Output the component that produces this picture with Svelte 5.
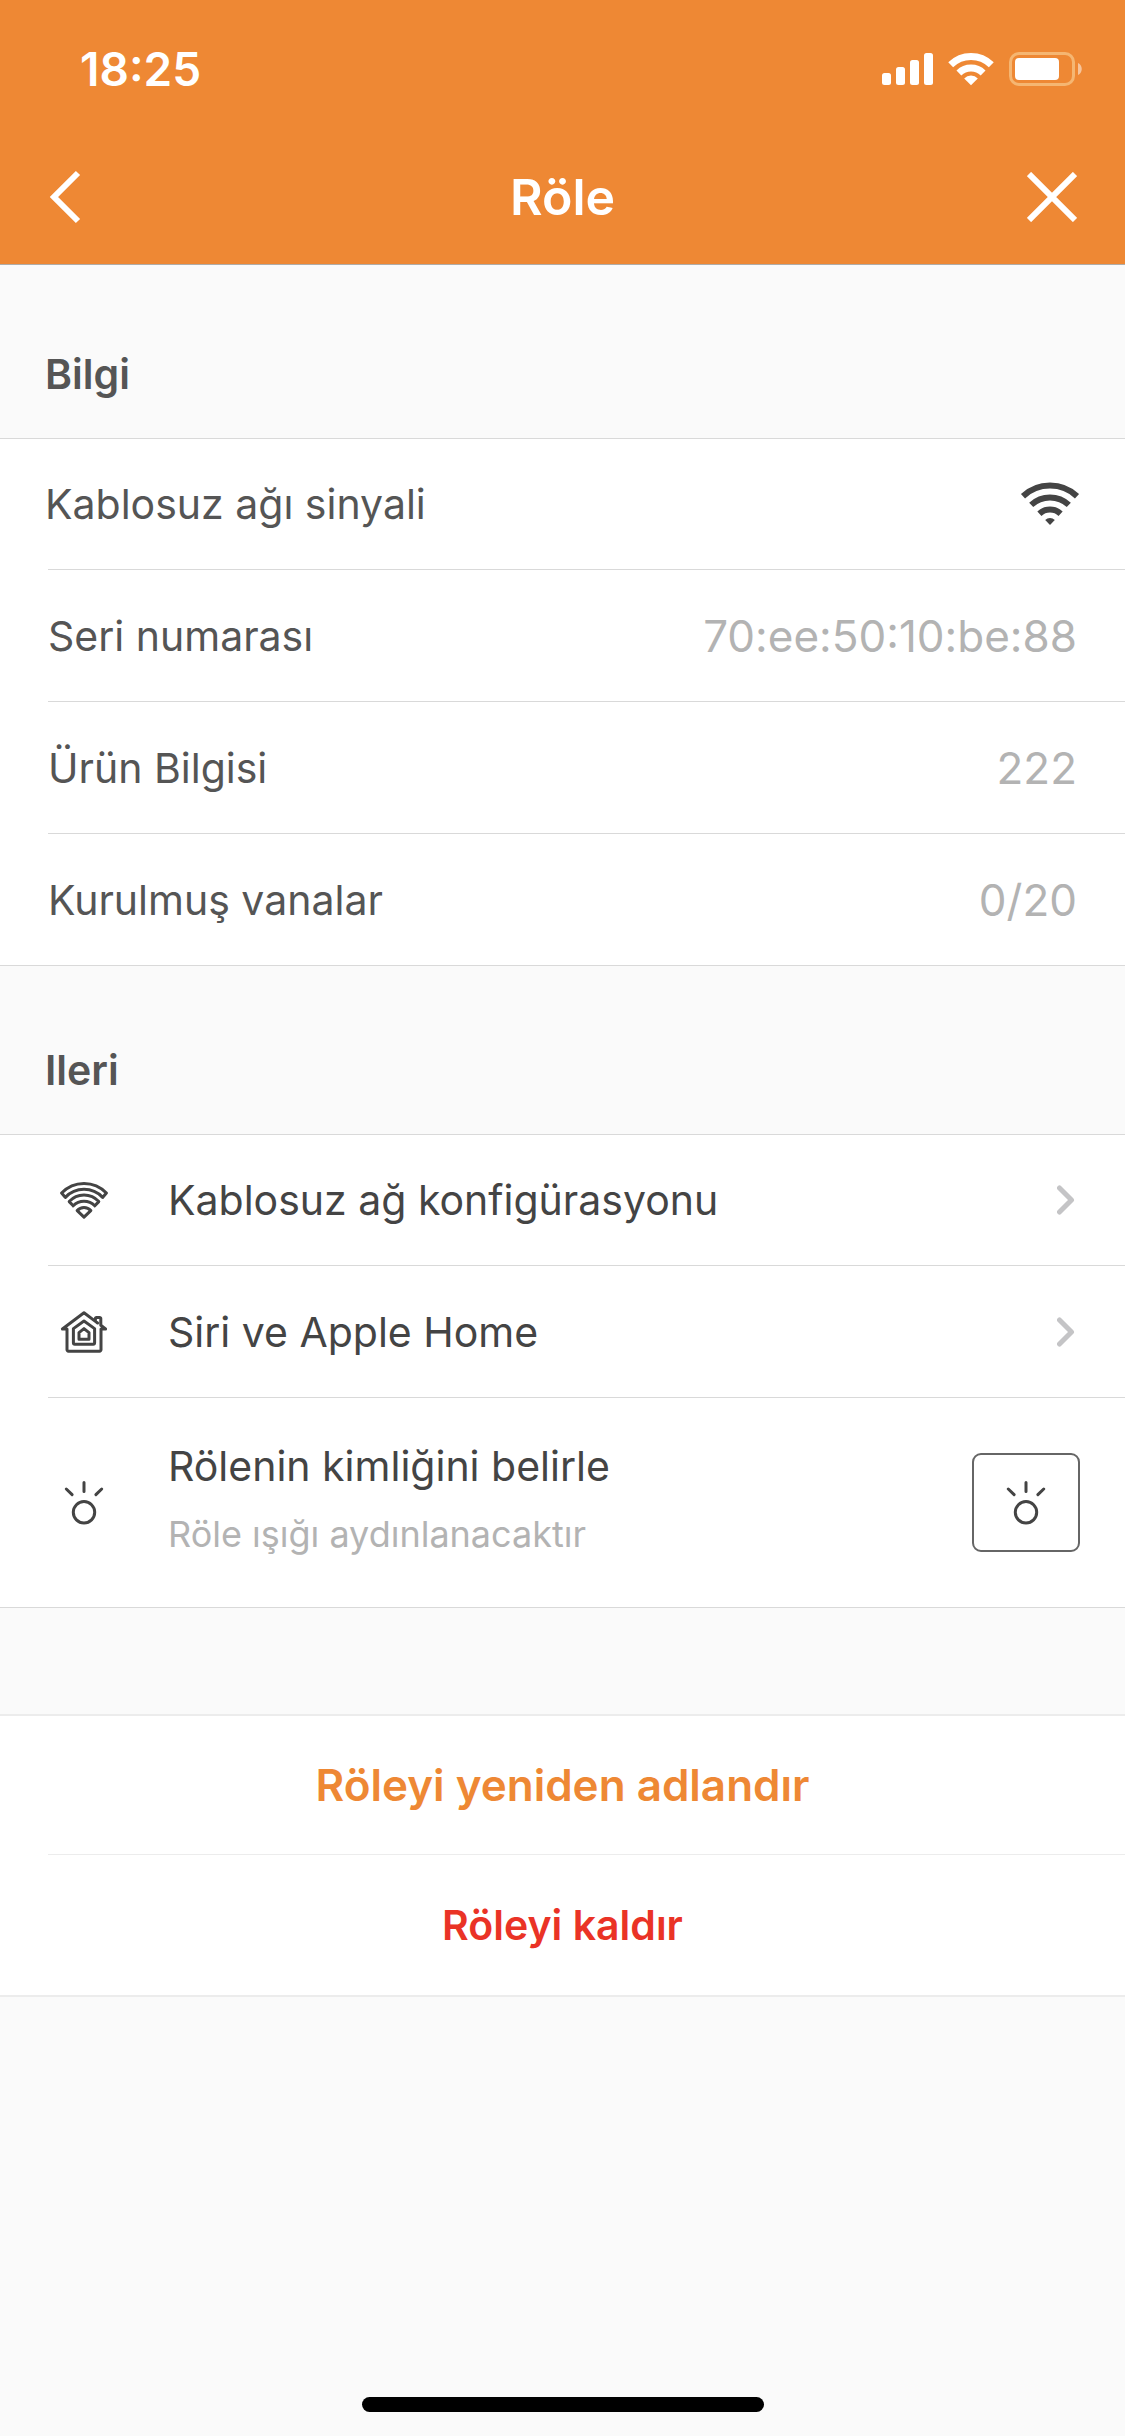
<script lang="ts">
	const info = [
		{ label: 'Seri numarası', value: '70:ee:50:10:be:88' },
		{ label: 'Ürün Bilgisi', value: '222' },
		{ label: 'Kurulmuş vanalar', value: '0/20' }
	];

	const links = [
		{ icon: 'wifi', label: 'Kablosuz ağ konfigürasyonu', href: '#wifi' },
		{ icon: 'home', label: 'Siri ve Apple Home', href: '#home' }
	];
</script>

<svelte:head>
	<title>Röle</title>
</svelte:head>

{#snippet bulb()}
	<svg class="line-icon" width="40" height="45" viewBox="0 0 40 45" aria-hidden="true">
		<circle cx="20" cy="32.3" r="10.7" />
		<path d="M20 2.5v9M2.3 9l5.8 5.6M37.7 9l-5.8 5.6" />
	</svg>
{/snippet}

<div class="screen">
	<header>
		<div class="status-bar">
			<span class="time">18:25</span>
			<div class="indicators">
				<svg width="51" height="34" viewBox="0 0 51 34" fill="#fff" aria-hidden="true">
					<rect x="0" y="21" width="9" height="12" rx="2.5" />
					<rect x="14" y="15" width="9" height="18" rx="2.5" />
					<rect x="28" y="8" width="9" height="25" rx="2.5" />
					<rect x="42" y="1" width="9" height="32" rx="2.5" />
				</svg>
				<svg width="46" height="34" viewBox="1 0 46 34" fill="none" stroke="#fff" stroke-width="7" aria-hidden="true">
					<path d="M3.7 12.8a29 29 0 0 1 40.6 0" />
					<path d="M11.9 20.9a17.4 17.4 0 0 1 24.2 0" />
					<path d="M17.2 26.4a9.6 9.6 0 0 1 13.6 0L24 33.2z" fill="#fff" stroke="none" />
				</svg>
				<svg width="73" height="34" viewBox="0 0 73 34" fill="#fff" aria-hidden="true">
					<rect x="1.5" y="1.5" width="63" height="31" rx="8.5" fill="none" stroke="#f5b672" stroke-width="3" />
					<rect x="6" y="6" width="44" height="22" rx="4" />
					<path d="M69 11c5 2 5 10 0 12z" opacity=".5" />
				</svg>
			</div>
		</div>
		<nav>
			<button type="button" class="nav-btn" aria-label="Geri">
				<svg width="34" height="54" viewBox="0 0 34 54" fill="none" stroke="#fff" stroke-width="6" aria-hidden="true">
					<path d="M30 3L6 27l24 24" />
				</svg>
			</button>
			<h1>Röle</h1>
			<button type="button" class="nav-btn close" aria-label="Kapat">
				<svg width="50" height="50" viewBox="0 0 50 50" fill="none" stroke="#fff" stroke-width="6" aria-hidden="true">
					<path d="M2 2l46 46M48 2L2 48" />
				</svg>
			</button>
		</nav>
	</header>

	<main>
		<section>
			<h2>Bilgi</h2>
			<dl class="card">
				<div class="row signal">
					<dt>Kablosuz ağı sinyali</dt>
					<dd>
						<svg width="60" height="44" viewBox="0 0 60 44" fill="none" stroke="#444" stroke-width="6" role="img" aria-label="Güçlü">
							<path d="M3 14.2a39.5 39.5 0 0 1 54 0" />
							<path d="M11.2 22.9a27.5 27.5 0 0 1 37.6 0" />
							<path d="M19.4 31.7a15.5 15.5 0 0 1 21.2 0" />
							<path d="M25.2 37.9a7 7 0 0 1 9.6 0L30 43z" fill="#444" stroke="none" />
						</svg>
					</dd>
				</div>
				{#each info as item}
					<div class="row">
						<dt>{item.label}</dt>
						<dd>{item.value}</dd>
					</div>
				{/each}
			</dl>
		</section>

		<section>
			<h2>Ileri</h2>
			<div class="card">
				{#each links as link}
					<a class="row" href={link.href}>
						<span class="icon">
							{#if link.icon === 'wifi'}
								<svg class="line-icon" width="48" height="38" viewBox="0 0 48 38" aria-hidden="true">
									<path d="M1.6 12a31 31 0 0 1 44.8 0L42.6 16.4a25.5 25.5 0 0 0-37.2 0z" />
									<path d="M9.2 20.6a20 20 0 0 1 29.6 0l-4 4.2a15 15 0 0 0-21.6 0z" />
									<path d="M17.2 29.6a9 9 0 0 1 13.6 0L24 36.2z" />
								</svg>
							{:else}
								<svg class="line-icon" width="48" height="44" viewBox="0 0 48 44" aria-hidden="true">
									<path d="M35.4 11.4L24 2.8 2.4 19H7v20.8a1.4 1.4 0 0 0 1.4 1.4h31.2a1.4 1.4 0 0 0 1.4-1.4V19h4.6L40.8 15.3V8.6a1.2 1.2 0 0 0-1.2-1.2h-3a1.2 1.2 0 0 0-1.2 1.2v2.8l2.2 1.6" />
									<path d="M24 11l10.6 7.6v14.2a1.4 1.4 0 0 1-1.4 1.4H14.8a1.4 1.4 0 0 1-1.4-1.4V18.6z" />
									<path d="M24 18.6l5 4v6.6H19v-6.6z" />
								</svg>
							{/if}
						</span>
						<span class="label">{link.label}</span>
						<svg class="chevron" width="20" height="32" viewBox="0 0 20 32" aria-hidden="true">
							<path d="M2.5 4l12 12-12 12" />
						</svg>
					</a>
				{/each}
				<div class="row identify">
					<span class="icon">{@render bulb()}</span>
					<div class="label">
						<p>Rölenin kimliğini belirle</p>
						<p class="hint">Röle ışığı aydınlanacaktır</p>
					</div>
					<button type="button" class="identify-btn" aria-label="Rölenin kimliğini belirle">
						{@render bulb()}
					</button>
				</div>
			</div>
		</section>

		<section class="actions">
			<button type="button" class="rename">Röleyi yeniden adlandır</button>
			<button type="button" class="remove">Röleyi kaldır</button>
		</section>
	</main>

	<div class="home-indicator"></div>
</div>

<style>
	:global(body) { margin: 0; background: #fafafa; }

	.screen {
		display: flex; flex-direction: column; min-height: 100vh;
		background: #fafafa; color: #444;
		font-family: Inter, "Liberation Sans", sans-serif; font-size: 41px; line-height: 48px;
	}
	svg { display: block; flex: none; }
	button { padding: 0; border: none; background: none; font: inherit; color: inherit; cursor: pointer; }
	h1, h2, p, dl, dd { margin: 0; }

	header { background: #ee8834; color: #fff; border-bottom: 1px solid #b0aca8; }
	.status-bar {
		display: flex; align-items: center; justify-content: space-between;
		box-sizing: border-box; height: 132px; padding: 6px 43px 0 80px;
	}
	.time { font-size: 46px; font-weight: 600; }
	.indicators { display: flex; align-items: center; gap: 15px; }

	nav { display: grid; grid-template-columns: 1fr auto 1fr; align-items: center; height: 130px; padding: 0 48px 2px; }
	h1 { font-size: 50px; font-weight: 600; line-height: 60px; }
	.nav-btn { justify-self: start; }
	.nav-btn.close { justify-self: end; }

	h2 { padding: 85px 45px 40px; font-size: 41px; font-weight: 600; color: #555; }
	section + section h2 { padding-top: 80px; }

	.card { background: #fff; border: solid #d9d9d9; border-width: 1px 0; }
	.row {
		display: flex; align-items: center; box-sizing: border-box; min-height: 132px;
		margin-left: 48px; padding-right: 48px; border-top: 1px solid #d9d9d9;
		color: inherit; text-decoration: none;
	}
	.row:first-child { min-height: 130px; border-top: none; }
	.signal { margin-left: 45px; padding-right: 45px; }
	dt { flex: 1; color: #555; }
	dd { font-size: 44px; color: #b3b3b3; }

	.icon { display: flex; justify-content: center; width: 72px; margin-right: 48px; }
	.line-icon { fill: none; stroke: #444; stroke-width: 3; stroke-linecap: round; stroke-linejoin: round; }
	.label { flex: 1; }
	.chevron { fill: none; stroke: #c4c4c6; stroke-width: 5; stroke-linecap: round; stroke-linejoin: round; }

	.identify { min-height: 210px; padding-right: 45px; }
	.identify .label { padding-bottom: 6px; }
	.hint { margin-top: 20px; font-size: 36px; color: #b3b3b3; }
	.identify-btn {
		display: flex; align-items: center; justify-content: center; box-sizing: border-box;
		width: 108px; height: 99px; border: 2px solid #666; border-radius: 9px;
	}

	.actions {
		display: flex; flex-direction: column; margin-top: 106px;
		background: #fff; border: solid #ececec; border-width: 2px 0;
	}
	.actions button { min-height: 138px; font-weight: 600; }
	.rename { font-size: 44px; color: #ee8834; }
	.actions .remove { min-height: 141px; margin-left: 48px; padding-right: 48px; border-top: 1px solid #ececec; color: #ea3326; }

	.home-indicator { width: 402px; height: 15px; margin: auto auto 24px; border-radius: 8px; background: #000; }
</style>
